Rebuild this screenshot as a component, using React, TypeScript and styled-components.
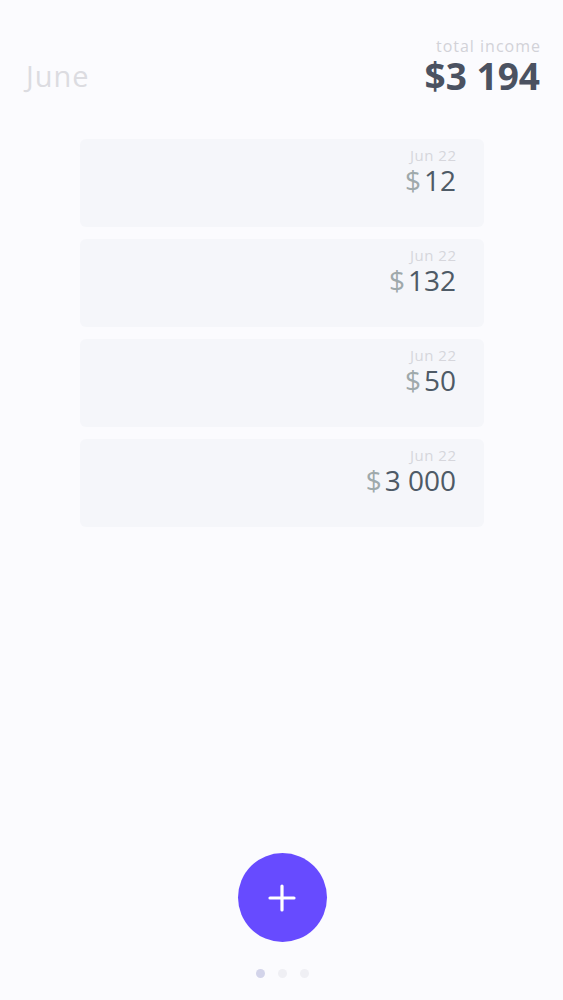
import React from 'react';
import styled, { createGlobalStyle } from 'styled-components';

const GlobalStyle = createGlobalStyle`
  html, body {
    margin: 0;
    padding: 0;
    background: #fbfbfe;
  }
  body {
    font-family: "Open Sans", Lato, sans-serif;
  }
`;

interface Income {
  id: number;
  date: string;
  amount: string;
}

const incomes: Income[] = [
  { id: 1, date: 'Jun 22', amount: '12' },
  { id: 2, date: 'Jun 22', amount: '132' },
  { id: 3, date: 'Jun 22', amount: '50' },
  { id: 4, date: 'Jun 22', amount: '3 000' },
];

export default function App() {
  return (
    <>
      <GlobalStyle />
      <Page>
        <Header>
          <Month>June</Month>
          <Total>
            <TotalLabel>total income</TotalLabel>
            <TotalValue>$3 194</TotalValue>
          </Total>
        </Header>
        <List>
          {incomes.map(item => (
            <Card key={item.id}>
              <CardDate>{item.date}</CardDate>
              <Amount>
                <Currency>$</Currency>
                {item.amount}
              </Amount>
            </Card>
          ))}
        </List>
        <Footer>
          <AddButton aria-label="add">
            <svg width="30" height="30" viewBox="0 0 30 30">
              <path d="M15 3v24M3 15h24" stroke="#fff" strokeWidth="3.2" strokeLinecap="round" />
            </svg>
          </AddButton>
          <Dots>
            <Dot active />
            <Dot />
            <Dot />
          </Dots>
        </Footer>
      </Page>
    </>
  );
}

const Page = styled.div`
  display: flex;
  flex-direction: column;
  height: 1000px;
  box-sizing: border-box;
  padding-top: 38px;
`;

const Header = styled.div`
  display: flex;
  justify-content: space-between;
  align-items: flex-end;
  padding: 0 23px 0 26px;
`;

const Month = styled.div`
  font-size: 29px;
  color: #dcdce1;
  line-height: 1;
  letter-spacing: 1px;
  padding-bottom: 5px;
`;

const Total = styled.div`
  display: flex;
  flex-direction: column;
  align-items: flex-end;
  gap: 2px;
`;

const TotalLabel = styled.span`
  font-size: 16px;
  color: #d2d2d8;
  line-height: 17px;
  letter-spacing: 1px;
  margin-right: -1px;
`;

const TotalValue = styled.span`
  font-size: 37px;
  font-weight: 700;
  color: #4b5261;
  line-height: 38px;
`;

const List = styled.div`
  display: flex;
  flex-direction: column;
  gap: 12px;
  margin: 44px 79px 0 80px;
`;

const Card = styled.div`
  display: flex;
  flex-direction: column;
  align-items: flex-end;
  gap: 3px;
  height: 88px;
  box-sizing: border-box;
  padding: 9px 28px 0 0;
  background: #f5f6fa;
  border-radius: 6px;
`;

const CardDate = styled.span`
  font-size: 15px;
  color: #d6d6dc;
  line-height: 15px;
  letter-spacing: 0.5px;
  margin-right: -0.5px;
`;

const Amount = styled.span`
  font-size: 28px;
  color: #4e5a66;
  line-height: 28px;
`;

const Currency = styled.span`
  color: #9fa9ab;
  margin-right: 3px;
`;

const Footer = styled.div`
  margin-top: auto;
  display: flex;
  flex-direction: column;
  align-items: center;
  padding-bottom: 22px;
  padding-left: 1px;
`;

const AddButton = styled.button`
  width: 89px;
  height: 89px;
  border-radius: 50%;
  border: none;
  background: #674bff;
  display: flex;
  align-items: center;
  justify-content: center;
  padding: 0;
  cursor: pointer;
`;

const Dots = styled.div`
  display: flex;
  gap: 13px;
  margin-top: 27px;
`;

const Dot = styled.span<{ active?: boolean }>`
  width: 9px;
  height: 9px;
  border-radius: 50%;
  background: ${p => (p.active ? '#d3d4ea' : '#efeff4')};
`;
